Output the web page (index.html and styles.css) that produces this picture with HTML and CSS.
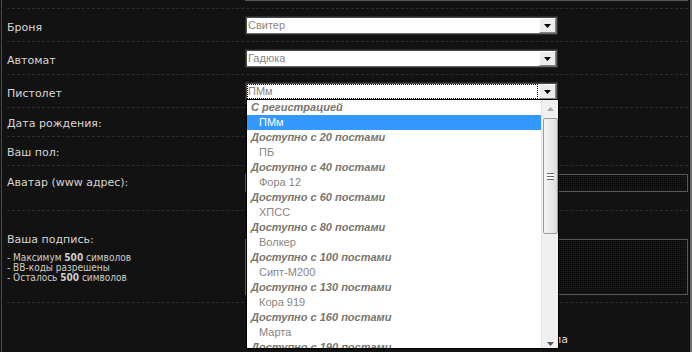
FILE: index.html
```html
<!DOCTYPE html>
<html lang="ru">
<head>
    <meta charset="UTF-8">
    <title>Профиль</title>
    <link rel="stylesheet" href="styles.css">
</head>
<body>
    <div class="page">
        <div class="form">
            <div class="row row-top">
                <div class="label"></div>
                <div class="field"><div class="box box-prev"></div></div>
            </div>

            <div class="row row-select">
                <div class="label">Броня</div>
                <div class="field">
                    <div class="select">
                        <span class="select-value">Свитер</span>
                        <span class="select-btn"><svg width="7" height="4" viewBox="0 0 7 4"><path d="M0 0h7L3.5 4z" fill="#000"/></svg></span>
                    </div>
                </div>
            </div>

            <div class="row row-select">
                <div class="label">Автомат</div>
                <div class="field">
                    <div class="select">
                        <span class="select-value">Гадюка</span>
                        <span class="select-btn"><svg width="7" height="4" viewBox="0 0 7 4"><path d="M0 0h7L3.5 4z" fill="#000"/></svg></span>
                    </div>
                </div>
            </div>

            <div class="row row-select">
                <div class="label">Пистолет</div>
                <div class="field">
                    <div class="select select-open">
                        <span class="select-value focused">ПМм</span>
                        <span class="select-btn"><svg width="7" height="4" viewBox="0 0 7 4"><path d="M0 0h7L3.5 4z" fill="#000"/></svg></span>

                        <!-- open list of the select -->
                        <div class="dropdown">
                            <div class="dd-list">
                                <div class="dd-group">С регистрацией</div>
                                <div class="dd-option selected">ПМм</div>
                                <div class="dd-group">Доступно с 20 постами</div>
                                <div class="dd-option">ПБ</div>
                                <div class="dd-group">Доступно с 40 постами</div>
                                <div class="dd-option">Фора 12</div>
                                <div class="dd-group">Доступно с 60 постами</div>
                                <div class="dd-option">ХПСС</div>
                                <div class="dd-group">Доступно с 80 постами</div>
                                <div class="dd-option">Волкер</div>
                                <div class="dd-group">Доступно с 100 постами</div>
                                <div class="dd-option">Сипт-М200</div>
                                <div class="dd-group">Доступно с 130 постами</div>
                                <div class="dd-option">Кора 919</div>
                                <div class="dd-group">Доступно с 160 постами</div>
                                <div class="dd-option">Марта</div>
                                <div class="dd-group">Доступно с 190 постами</div>
                            </div>
                            <div class="dd-scroll">
                                <span class="scroll-up"><svg width="7" height="4" viewBox="0 0 7 4"><path d="M3.5 0L7 4H0z" fill="#a8a8a8"/></svg></span>
                                <span class="scroll-thumb"><span class="grip"></span></span>
                                <span class="scroll-down"><svg width="7" height="4" viewBox="0 0 7 4"><path d="M0 0h7L3.5 4z" fill="#555"/></svg></span>
                            </div>
                        </div>
                    </div>
                </div>
            </div>

            <div class="row row-short">
                <div class="label">Дата рождения:</div>
                <div class="field"></div>
            </div>

            <div class="row row-short">
                <div class="label">Ваш пол:</div>
                <div class="field"></div>
            </div>

            <div class="row row-avatar">
                <div class="label">Аватар (www адрес):</div>
                <div class="field"><div class="box box-input"></div></div>
            </div>

            <div class="row row-sign">
                <div class="label">
                    Ваша подпись:
                    <ul class="hints">
                        <li>- Максимум <b>500</b> символов</li>
                        <li>- BB-коды разрешены</li>
                        <li>- Осталось <b>500</b> символов</li>
                    </ul>
                </div>
                <div class="field"><div class="box box-area"></div></div>
            </div>

            <div class="row row-last">
                <div class="label"></div>
                <div class="field"><div class="option-text">Показывать мой e-mail другим пользователям форума</div></div>
            </div>
        </div>
    </div>
</body>
</html>
```

FILE: styles.css
```css
body {
    margin: 0;
    background-color: #121212;
    color: #d8d6d2;
    font-family: "DejaVu Sans", Verdana, sans-serif;
    font-size: 11px;
    height: 352px;
    overflow: hidden;
}
.page {
    margin-left: 1px;
    border-left: 1px solid #4a4a4a;
    border-right: 2px solid #6c6c6c;
    padding: 0 2px 0 5px;
    height: 352px;
    overflow: hidden;
}
.form {
    margin-top: -30px;
}
.row {
    display: grid;
    grid-template-columns: 239px 1fr;
    border-bottom: 1px dashed #2e2e2e;
}
.label {
    line-height: 14px;
}
.row-top {
    padding-bottom: 7px;
}
.row-select {
    padding: 8px 0 7px;
}
.row-select .label {
    padding-top: 4px;
    line-height: 13px;
}
.row-short {
    height: 28px;
}
.row-short .label {
    padding-top: 9px;
}
.row-avatar {
    height: 44px;
}
.row-avatar .label {
    padding-top: 10px;
}
.row-avatar .field {
    padding-top: 8px;
}
.row-sign {
    padding-bottom: 7px;
}
.row-sign .label {
    padding-top: 22px;
}
.row-sign .field {
    padding-top: 28px;
}
.row-last {
    padding-top: 30px;
    height: 20px;
    border-bottom: none;
}
.hints {
    list-style: none;
    margin: 6px 0 0;
    padding: 0;
    font-family: "DejaVu Sans Condensed", "DejaVu Sans", sans-serif;
    font-size: 10px;
    line-height: 10px;
    color: #d0cec9;
}
.option-text {
    width: 322px;
    text-align: right;
    white-space: nowrap;
    overflow: hidden;
    line-height: 14px;
}

/* dark inputs */
.box {
    box-sizing: border-box;
    margin-left: -1px;
    border: 1px solid #575757;
    background-color: #1c1c1c;
    background-image: linear-gradient(90deg, rgba(0, 0, 0, 0.4) 1px, transparent 1px),
                      linear-gradient(rgba(0, 0, 0, 0.4) 1px, transparent 1px);
    background-size: 2px 2px;
}
.box-prev {
    height: 31px;
    border-top: none;
}
.box-input {
    height: 18px;
}
.box-area {
    height: 56px;
}

/* selects */
.select {
    position: relative;
    box-sizing: border-box;
    width: 311px;
    height: 17px;
    display: flex;
    background-color: #fff;
    border: 1px solid #484848;
    border-right-color: #666;
    border-bottom-color: #666;
    box-shadow: 0 0 0 1px #2a2a2a;
    font-family: "Liberation Sans", Arial, sans-serif;
    font-size: 11px;
}
.select-value {
    flex: 1;
    line-height: 15px;
    padding-left: 1px;
    color: #8a8580;
}
.select-value.focused {
    margin: 0 1px 0 0;
    outline: 1px dotted #000;
    outline-offset: -1px;
    padding-left: 1px;
}
.select-btn {
    box-sizing: border-box;
    width: 17px;
    height: 15px;
    display: flex;
    justify-content: center;
    align-items: center;
    background-color: #ececec;
    border: 1px solid;
    border-color: #fff #808080 #808080 #fff;
}
.select-btn svg {
    display: block;
    margin-top: 1px;
}

/* open list */
.dropdown {
    position: absolute;
    top: 15px;
    left: -1px;
    width: 313px;
    height: 250px;
    box-sizing: border-box;
    display: flex;
    background-color: #fff;
    border: 1px solid #000;
    z-index: 2;
}
.dd-list {
    flex: 1;
    overflow: hidden;
}
.dd-group,
.dd-option {
    height: 15px;
    line-height: 15px;
    white-space: nowrap;
}
.dd-group {
    padding-left: 4px;
    font-weight: bold;
    font-style: italic;
    color: #7a756d;
}
.dd-option {
    padding-left: 12px;
    color: #8a8580;
}
.dd-option.selected {
    background-color: #3399ff;
    color: #fff;
}
.dd-scroll {
    position: relative;
    width: 16px;
    background-color: #f0f0f0;
    border-left: 1px solid #e4e4e4;
    display: flex;
    flex-direction: column;
    align-items: center;
}
.scroll-up {
    height: 18px;
    display: flex;
    align-items: center;
}
.scroll-thumb {
    box-sizing: border-box;
    width: 15px;
    height: 116px;
    border: 1px solid #9c9c9c;
    border-radius: 2px;
    background: linear-gradient(90deg, #f6f6f6, #e8e8e8 60%, #dadada);
    display: flex;
    justify-content: center;
    align-items: center;
}
.grip {
    width: 7px;
    height: 5px;
    border-top: 1px solid #6a6a6a;
    border-bottom: 1px solid #6a6a6a;
    background: linear-gradient(#fff 2px, #6a6a6a 2px, #6a6a6a 3px, #fff 3px);
}
.scroll-down {
    margin-top: auto;
    height: 12px;
}
```
